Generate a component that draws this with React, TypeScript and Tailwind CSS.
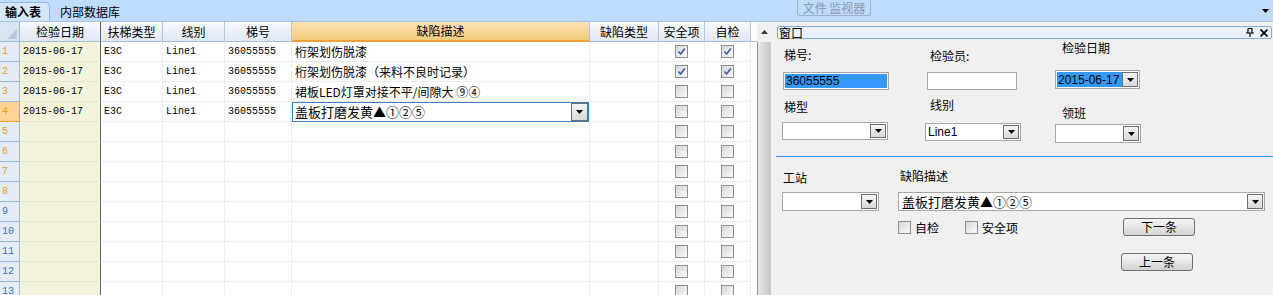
import React from "react";

type Row = { date: string; type: string; line: string; no: string; desc: string; safe: boolean; self: boolean };

const filled: Row[] = [
  { date: "2015-06-17", type: "E3C", line: "Line1", no: "36055555", desc: "桁架划伤脱漆", safe: true, self: true },
  { date: "2015-06-17", type: "E3C", line: "Line1", no: "36055555", desc: "桁架划伤脱漆（来料不良时记录）", safe: true, self: true },
  { date: "2015-06-17", type: "E3C", line: "Line1", no: "36055555", desc: "裙板LED灯罩对接不平/间隙大 ⑨④", safe: false, self: false },
  { date: "2015-06-17", type: "E3C", line: "Line1", no: "36055555", desc: "", safe: false, self: false },
];
const rows: Row[] = [
  ...filled,
  ...Array.from({ length: 9 }, () => ({ date: "", type: "", line: "", no: "", desc: "", safe: false, self: false })),
];

const mono = "font-['Liberation_Mono',monospace] text-[10px]";
const sans = "font-['Liberation_Sans',sans-serif] text-[12px]";

function Down() {
  return (
    <svg width="7" height="4" viewBox="0 0 7 4"><polygon points="0,0 7,0 3.5,4" fill="#000" /></svg>
  );
}

function DropBtn() {
  return (
    <div className="flex h-full w-[16px] shrink-0 items-center justify-center border border-[#6e6e6e] bg-linear-to-b from-[#f6f6f6] to-[#d9d9d9]">
      <Down />
    </div>
  );
}

function Combo({ className, children }: { className: string; children?: React.ReactNode }) {
  return (
    <div className={`flex border border-[#a7a7a7] bg-white p-px ${className}`}>
      <div className="flex min-w-0 flex-1 items-center whitespace-nowrap">{children}</div>
      <DropBtn />
    </div>
  );
}

function Check({ on }: { on?: boolean }) {
  return (
    <div className="flex h-[13px] w-[13px] shrink-0 items-center justify-center border border-[#8e8f8f] bg-linear-to-br from-[#d4d6d9] to-[#fafafa]">
      {on && (
        <svg width="9" height="9" viewBox="0 0 9 9">
          <path d="M1.5 4.5 L3.6 7 L7.8 1.5" fill="none" stroke="#3b5ca8" strokeWidth="1.6" />
        </svg>
      )}
    </div>
  );
}

function Btn({ children, className = "" }: { children: React.ReactNode; className?: string }) {
  return (
    <div className={`flex h-[18px] w-[72px] items-center justify-center rounded-[3px] border border-[#707070] bg-linear-to-b from-[#f4f4f4] via-[#e6e6e6] to-[#d2d2d2] ${className}`}>
      {children}
    </div>
  );
}

function HeadCell({ w, title, dark, hot }: { w: string; title: string; dark?: boolean; hot?: boolean }) {
  return (
    <div
      className={`flex h-full items-center justify-center border-r ${w} ${dark ? "border-r-[#646464]" : "border-r-[#b3c6dd]"} ${
        hot
          ? "border-b-2 border-b-[#f0a13a] bg-linear-to-b from-[#fae3b5] to-[#f5c97b]"
          : "border-b border-b-[#a5bedc] bg-linear-to-b from-[#f8fafd] to-[#e0e8f3]"
      }`}
    >
      {title}
    </div>
  );
}

function Grid() {
  return (
    <div className="flex w-[757px] shrink-0 flex-col bg-white">
      <div className="flex h-[20px] shrink-0">
        <div className="relative h-full w-[20px] border-r border-b border-[#9cb9dc] bg-[#dbe5f2]">
          <svg className="absolute right-[2px] bottom-[2px]" width="10" height="10" viewBox="0 0 10 10">
            <polygon points="10,0 10,10 0,10" fill="#b7c7dc" />
          </svg>
        </div>
        <HeadCell w="w-[81px]" title="检验日期" dark />
        <HeadCell w="w-[62px]" title="扶梯类型" />
        <HeadCell w="w-[62px]" title="线别" />
        <HeadCell w="w-[67px]" title="梯号" />
        <HeadCell w="w-[298px]" title="缺陷描述" hot />
        <HeadCell w="w-[69px]" title="缺陷类型" />
        <HeadCell w="w-[46px]" title="安全项" />
        <HeadCell w="w-[46px]" title="自检" />
        <div className="h-full flex-1 border-b border-[#a5bedc] bg-white" />
      </div>
      {rows.map((r, i) => {
        const sel = i === 3;
        return (
          <div key={i} className="flex h-[20px] shrink-0">
            <div
              className={`flex h-full w-[20px] items-center border-r border-b pl-[2px] ${mono} ${
                sel ? "border-[#f0a030] bg-[#ffd597]" : "border-[#9cb9dc] bg-[#e4ecf7]"
              } ${i < 8 ? "text-[#f29b16]" : "text-[#3d78b5]"}`}
            >
              {i + 1}
            </div>
            <div className={`flex h-full w-[81px] items-center border-r border-b border-r-[#646464] border-b-[#e6e6d2] bg-[#f4f4dc] pl-[3px] ${mono}`}>{r.date}</div>
            <div className={`flex h-full w-[62px] items-center border-r border-b border-[#ececec] pl-[3px] ${mono}`}>{r.type}</div>
            <div className={`flex h-full w-[62px] items-center border-r border-b border-[#ececec] pl-[3px] ${mono}`}>{r.line}</div>
            <div className={`flex h-full w-[67px] items-center border-r border-b border-[#ececec] pl-[3px] ${mono}`}>{r.no}</div>
            <div className="flex h-full w-[298px] items-center border-r border-b border-[#ececec] whitespace-nowrap">
              {sel ? (
                <div className="flex h-[20px] w-[298px] border border-[#3d7fc1] bg-white">
                  <div className="flex flex-1 items-center pl-[2px] text-[13px] leading-none">盖板打磨发黄▲①②⑤</div>
                  <div className="flex w-[17px] items-center justify-center border border-[#6e6e6e] bg-linear-to-b from-[#f4f4f4] to-[#dadada]">
                    <Down />
                  </div>
                </div>
              ) : (
                <span className="pl-[3px]">{r.desc}</span>
              )}
            </div>
            <div className="h-full w-[69px] border-r border-b border-[#ececec]" />
            <div className="flex h-full w-[46px] items-center justify-center border-r border-b border-[#ececec]">
              <Check on={r.safe} />
            </div>
            <div className="flex h-full w-[46px] items-center justify-center border-r border-b border-[#ececec]">
              <Check on={r.self} />
            </div>
            <div className="h-full flex-1 bg-white" />
          </div>
        );
      })}
    </div>
  );
}

function Panel() {
  return (
    <div className="flex flex-1 flex-col bg-[#f0f0f0] pt-[4px]">
      <div className="mr-[1px] ml-[6px] flex h-[13px] items-center justify-between rounded-[2px] border border-[#86aadb] bg-[#eaf1fa] pr-[3px] pl-[1px] text-[12px] leading-none">
        <span>窗口</span>
        <div className="flex items-center gap-[6px]">
          <svg width="8" height="9" viewBox="0 0 8 9">
            <path d="M2 0.5 H6 V4.5 M2 0.5 V4.5 M0 5 H8 M4 5 V9" fill="none" stroke="#000" strokeWidth="1.2" />
          </svg>
          <svg width="8" height="8" viewBox="0 0 8 8">
            <path d="M0.5 0.5 L7.5 7.5 M7.5 0.5 L0.5 7.5" stroke="#000" strokeWidth="1.6" />
          </svg>
        </div>
      </div>

      <div className="flex h-[117px] pl-[11px]">
        <div className="flex w-[143px] flex-col">
          <div className="mt-[8px] ml-[2px] h-4 leading-4">梯号:</div>
          <div className="mt-[9px] ml-[1px] flex h-[18px] w-[106px] border border-[#a7a7a7] bg-white p-px">
            <div className={`flex flex-1 items-center bg-[#3399ff] pl-[1px] leading-none ${sans}`}>36055555</div>
          </div>
          <div className="mt-[9px] ml-[2px] h-4 leading-4">梯型</div>
          <Combo className="mt-[7px] h-[18px] w-[106px]" />
        </div>
        <div className="flex w-[130px] flex-col">
          <div className="mt-[9px] ml-[5px] h-4 leading-4">检验员:</div>
          <div className="mt-[8px] ml-[2px] h-[18px] w-[90px] border border-[#a7a7a7] bg-white" />
          <div className="mt-[7px] ml-[5px] h-4 leading-4">线别</div>
          <Combo className="mt-[10px] h-[18px] w-[96px]">
            <span className={`pl-[1px] leading-none ${sans}`}>Line1</span>
          </Combo>
        </div>
        <div className="flex flex-col">
          <div className="mt-[1px] ml-[7px] h-4 leading-4">检验日期</div>
          <Combo className="mt-[14px] h-[19px] w-[85px]">
            <div className={`flex h-full flex-1 items-center bg-[#3399ff] pl-[1px] leading-none ${sans}`}>2015-06-17</div>
          </Combo>
          <div className="mt-[16px] ml-[7px] h-4 leading-4">领班</div>
          <Combo className="mt-[3px] h-[19px] w-[86px]" />
        </div>
      </div>

      <div className="ml-[5px] h-px shrink-0 bg-[#3399ff]" />

      <div className="flex pl-[11px]">
        <div className="flex w-[116px] flex-col">
          <div className="mt-[13px] ml-[1px] h-4 leading-4">工站</div>
          <Combo className="mt-[6px] h-[19px] w-[97px]" />
        </div>
        <div className="flex flex-col">
          <div className="mt-[11px] ml-[2px] h-4 leading-4">缺陷描述</div>
          <Combo className="mt-[8px] h-[19px] w-[367px]">
            <span className="pl-[2px] text-[13px] leading-none">盖板打磨发黄▲①②⑤</span>
          </Combo>
          <div className="flex">
            <div className="flex w-[225px] items-start pt-[10px]">
              <div className="flex w-[67px] items-center gap-[4px]">
                <Check />
                <span className="leading-[13px]">自检</span>
              </div>
              <div className="flex items-center gap-[4px]">
                <Check />
                <span className="leading-[13px]">安全项</span>
              </div>
            </div>
            <div className="flex flex-col pt-[7px]">
              <Btn>下一条</Btn>
              <Btn className="mt-[17px] -ml-[2px]">上一条</Btn>
            </div>
          </div>
        </div>
      </div>
    </div>
  );
}

export default function App() {
  return (
    <div className="flex h-[295px] w-[1273px] flex-col overflow-hidden bg-white font-['Noto_Sans_CJK_SC',sans-serif] text-[12px] leading-4 text-black">
      <div className="flex h-[22px] shrink-0 border-b border-[#a6c4e8] bg-[#bfdbfd]">
        <div className="flex w-[797px] items-end">
          <div className="flex h-[19px] w-[50px] items-center rounded-tr-[5px] border-t border-r border-[#93b6e3] bg-[#d6e6fb] pl-[5px] font-bold">输入表</div>
          <div className="flex h-[19px] items-center pl-[10px]">内部数据库</div>
        </div>
        <div className="flex h-[16px] w-[74px] items-center justify-center self-start rounded-b-[3px] border border-t-0 border-[#a0b2c8] text-[12px] leading-[15px] whitespace-nowrap text-[#8b9aae]">文件 监视器</div>
        <div className="flex flex-1 items-center justify-end pr-[4px]">
          <Down />
        </div>
      </div>
      <div className="flex flex-1 overflow-hidden">
        <Grid />
        <div className="flex w-[14px] shrink-0 flex-col">
          <div className="flex h-[20px] items-center justify-center bg-[#f0f0f0]">
            <svg width="7" height="4" viewBox="0 0 7 4"><polygon points="0,4 7,4 3.5,0" fill="#333" /></svg>
          </div>
          <div className="flex-1 border-l border-[#8e8e8e] bg-linear-to-r from-[#e8e8e8] via-[#d4d4d4] to-[#c6c6c6]" />
        </div>
        <Panel />
      </div>
    </div>
  );
}
